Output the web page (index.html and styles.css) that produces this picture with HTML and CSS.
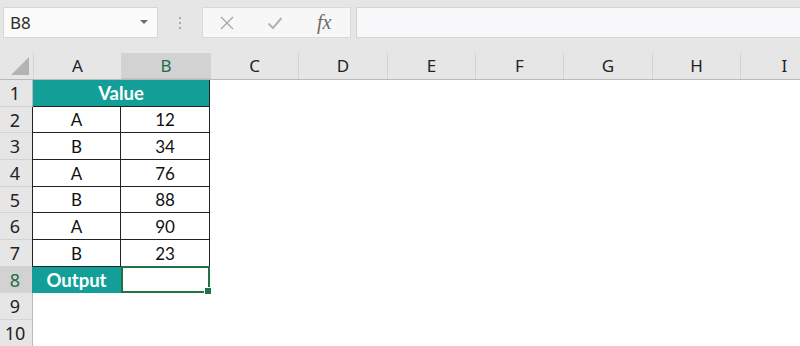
FILE: index.html
```html
<!DOCTYPE html>
<html>
<head>
  <link rel="stylesheet" href="styles.css">
</head>
<body>
  <!-- name box + formula bar -->
  <div class="toolbar">
    <div class="namebox">
      <span class="cellref">B8</span>
      <svg class="caret" width="8" height="5" viewBox="0 0 8 5"><path d="M0 0 L8 0 L4 4 Z" fill="#6b6b6b"/></svg>
    </div>
    <div class="grip"><i></i><i></i><i></i></div>
    <div class="fbuttons">
      <svg class="ficon" width="16" height="16" viewBox="0 0 16 16"><path d="M2 2 L14 14 M14 2 L2 14" stroke="#a8a8a8" stroke-width="1.4" fill="none"/></svg>
      <svg class="ficon" width="16" height="16" viewBox="0 0 16 16"><path d="M1.5 8.5 L6 13 L14.5 3" stroke="#b4b4b4" stroke-width="2" fill="none"/></svg>
      <span class="fx">fx</span>
    </div>
    <div class="formula"></div>
  </div>

  <div class="sheet">
    <div class="col-heads">
      <div class="corner"><svg width="20" height="20" viewBox="0 0 20 20"><path d="M19 1 L19 19 L1 19 Z" fill="#b3b3b3"/></svg></div>
      <div class="col-head">A</div>
      <div class="col-head wide active">B</div>
      <div class="col-head">C</div>
      <div class="col-head wide">D</div>
      <div class="col-head">E</div>
      <div class="col-head">F</div>
      <div class="col-head wide">G</div>
      <div class="col-head">H</div>
      <div class="col-head">I</div>
    </div>
    <div class="body">
      <div class="row-heads">
        <div class="row-head">1</div>
        <div class="row-head">2</div>
        <div class="row-head">3</div>
        <div class="row-head">4</div>
        <div class="row-head">5</div>
        <div class="row-head">6</div>
        <div class="row-head">7</div>
        <div class="row-head active">8</div>
        <div class="row-head">9</div>
        <div class="row-head">10</div>
      </div>
      <div class="cells">
        <div class="data">
          <div class="cell title">Value</div>
          <div class="cell">A</div><div class="cell">12</div>
          <div class="cell">B</div><div class="cell">34</div>
          <div class="cell">A</div><div class="cell">76</div>
          <div class="cell">B</div><div class="cell">88</div>
          <div class="cell">A</div><div class="cell">90</div>
          <div class="cell">B</div><div class="cell">23</div>
          <div class="cell label">Output</div>
          <div class="cell selected"><span class="handle"></span></div>
        </div>
      </div>
    </div>
  </div>
</body>
</html>
```

FILE: styles.css
```css
body {
  margin: 0;
  width: 800px;
  height: 346px;
  overflow: hidden;
  background-color: #e6e6e6;
  font-family: 'Noto Sans', sans-serif;
  color: #222;
}

/* formula bar */
.toolbar {
  display: flex;
  align-items: stretch;
  height: 31px;
  padding-top: 7px;
  padding-left: 3px;
  margin-bottom: 15px;
}

.namebox {
  width: 155px;
  background-color: #fafafa;
  border: 1px solid #d6d6d6;
  display: flex;
  align-items: center;
  justify-content: space-between;
  padding: 0 9px 0 6px;
  box-sizing: border-box;
}

.cellref {
  font-size: 17px;
  color: #2b2b2b;
}

.grip {
  width: 44px;
  display: flex;
  flex-direction: column;
  align-items: center;
  justify-content: center;
  gap: 3px;
}

.grip i {
  width: 2px;
  height: 2px;
  background-color: #a9a9a9;
}

.fbuttons {
  width: 149px;
  background-color: #f7f7f7;
  border: 1px solid #d9d9d9;
  box-sizing: border-box;
  display: flex;
  align-items: center;
  padding-left: 16px;
  gap: 32px;
}

.fx {
  font-family: 'Liberation Serif', serif;
  font-style: italic;
  font-size: 20px;
  color: #6a6a6a;
  margin-left: 2px;
}

.formula {
  flex: 1;
  margin-left: 5px;
  background-color: #f8f7f9;
  border: 1px solid #d4d4d4;
  border-right: none;
}

/* grid */
.sheet {
  background-color: #fff;
  height: 293px;
}

.col-heads {
  display: flex;
  height: 27px;
  background-color: #e6e6e6;
  border-bottom: 1px solid #b9b9b9;
  box-sizing: border-box;
}

.corner {
  width: 33px;
  flex: none;
  display: flex;
  align-items: flex-end;
  justify-content: flex-end;
  padding: 0 3px 3px 0;
  box-sizing: border-box;
}

.col-head {
  width: 88px;
  flex: none;
  border-left: 1px solid #d3d3d3;
  box-sizing: border-box;
  text-align: center;
  font-size: 17px;
  line-height: 26px;
}

.col-head.wide {
  width: 89px;
}

.col-head.active {
  background-color: #d2d2d2;
  color: #1e6b4a;
  border-bottom: 1px solid #c2c2c2;
}

.body {
  display: flex;
}

.row-heads {
  width: 33px;
  flex: none;
  background-color: #e6e6e6;
  border-right: 1px solid #b9b9b9;
  box-sizing: border-box;
}

.row-head {
  height: 26.67px;
  line-height: 26px;
  border-bottom: 1px solid #d3d3d3;
  box-sizing: border-box;
  text-align: center;
  font-size: 18px;
  padding-right: 2px;
}

.row-head.active {
  background-color: #d2d2d2;
  color: #1e6b4a;
}

.cells {
  flex: 1;
  background-color: #fff;
}

.data {
  display: grid;
  grid-template-columns: 88px 89px;
  grid-auto-rows: 26.67px;
  font-family: 'Lato', sans-serif;
  font-size: 17px;
  color: #111;
}

.cell {
  display: flex;
  align-items: center;
  justify-content: center;
  border-right: 1px solid #222;
  border-bottom: 1px solid #222;
  box-sizing: border-box;
  padding-top: 1px;
}

.cell:nth-child(even) {
  border-left: 1px solid #222;
  margin-left: -1px;
}

.cell.title {
  grid-column: span 2;
  background-color: #139f98;
  color: #fff;
  font-weight: bold;
  font-size: 18.5px;
  border-left: none;
  margin-left: 0;
}

.cell.label {
  background-color: #139f98;
  color: #fff;
  font-weight: bold;
  font-size: 18.5px;
  border: none;
}

.cell.selected {
  position: relative;
  border: 2px solid #217346;
  margin-left: 0;
  margin-top: -1px;
}

.handle {
  position: absolute;
  right: -4px;
  bottom: -4px;
  width: 6px;
  height: 6px;
  background-color: #217346;
  border: 1px solid #fff;
}
```
